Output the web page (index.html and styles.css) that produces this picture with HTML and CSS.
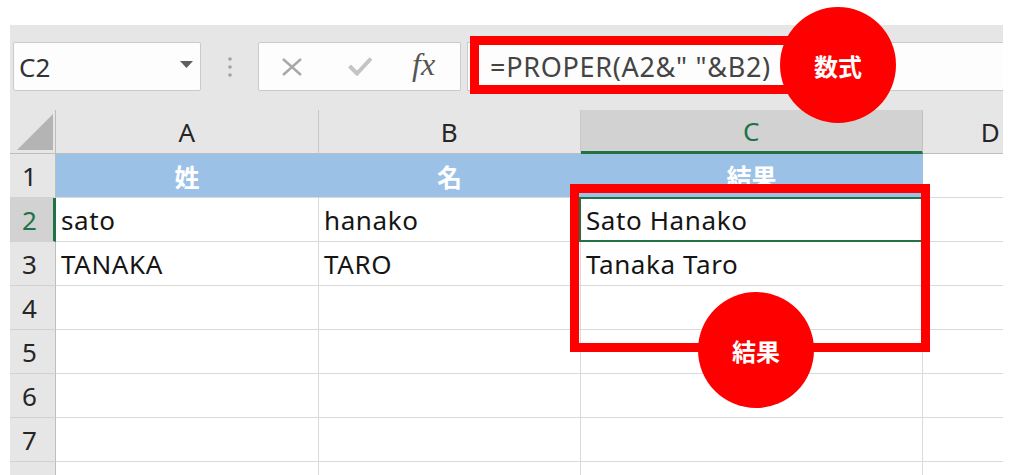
FILE: index.html
```html
<!DOCTYPE html>
<html lang="ja">
<head>
<meta charset="utf-8">
<title>PROPER</title>
<link rel="stylesheet" href="styles.css">
</head>
<body>
<div class="app">
  <div class="toolbar">
    <div class="namebox">
      <span>C2</span>
      <svg class="drop" width="13" height="7" viewBox="0 0 13 7"><polygon points="0,0 13,0 6.5,7" fill="#5f5f5f"/></svg>
    </div>
    <div class="grip">
      <svg width="4" height="20" viewBox="0 0 4 20"><circle cx="2" cy="2" r="1.8" fill="#a3a3a3"/><circle cx="2" cy="10" r="1.8" fill="#a3a3a3"/><circle cx="2" cy="18" r="1.8" fill="#a3a3a3"/></svg>
    </div>
    <div class="btnbox">
      <svg class="ico-x" width="20" height="18" viewBox="0 0 20 18"><path d="M1 1 L19 17 M19 1 L1 17" stroke="#a8a8a8" stroke-width="2.4" fill="none"/></svg>
      <svg class="ico-ok" width="24" height="20" viewBox="0 0 24 20"><polyline points="1.5,10 9,17.5 23,2.5" stroke="#c4c4c4" stroke-width="4" fill="none"/></svg>
      <span class="fx">fx</span>
    </div>
    <div class="formula">=PROPER(A2&amp;" "&amp;B2)</div>
  </div>
  <div class="sheet">
    <div class="c corner"><svg width="36" height="36" viewBox="0 0 36 36"><polygon points="0,36 36,0 36,36" fill="#b4b4b4"/></svg></div>
    <div class="c ch">A</div>
    <div class="c ch">B</div>
    <div class="c ch active">C</div>
    <div class="c ch">D</div>

    <div class="c rh">1</div>
    <div class="c hd">姓</div>
    <div class="c hd">名</div>
    <div class="c hd">結果</div>
    <div class="c"></div>

    <div class="c rh active">2</div>
    <div class="c">sato</div>
    <div class="c">hanako</div>
    <div class="c sel">Sato Hanako</div>
    <div class="c"></div>

    <div class="c rh">3</div>
    <div class="c">TANAKA</div>
    <div class="c">TARO</div>
    <div class="c">Tanaka Taro</div>
    <div class="c"></div>

    <div class="c rh">4</div><div class="c"></div><div class="c"></div><div class="c"></div><div class="c"></div>
    <div class="c rh">5</div><div class="c"></div><div class="c"></div><div class="c"></div><div class="c"></div>
    <div class="c rh">6</div><div class="c"></div><div class="c"></div><div class="c"></div><div class="c"></div>
    <div class="c rh">7</div><div class="c"></div><div class="c"></div><div class="c"></div><div class="c"></div>
    <div class="c rh">8</div><div class="c"></div><div class="c"></div><div class="c"></div><div class="c"></div>
  </div>
</div>

<div class="mark mark-formula"></div>
<div class="mark mark-result"></div>
<div class="badge badge-formula">数式</div>
<div class="badge badge-result">結果</div>
</body>
</html>
```

FILE: styles.css
```css
html, body {
  margin: 0;
  height: 475px;
  overflow: hidden;
  background: #ffffff;
}
body {
  position: relative;
  font-family: "Noto Sans", "Noto Sans CJK JP", sans-serif;
}
.app {
  margin: 25px 0 0 10px;
  width: 993px;
  overflow: hidden;
}
.toolbar {
  background: #e6e6e6;
  height: 85px;
  box-sizing: border-box;
  padding-top: 17px;
  display: flex;
  align-items: flex-start;
}
.namebox {
  margin-left: 3px;
  width: 188px;
  height: 49px;
  box-sizing: border-box;
  border: 1px solid #cacaca;
  border-radius: 2px;
  background: #fdfdfd;
  display: flex;
  align-items: center;
  justify-content: space-between;
  padding: 0 7px 0 5px;
  font-size: 26px;
  color: #333333;
}
.drop { margin-top: -4px; }
.grip {
  width: 57px;
  height: 49px;
  display: flex;
  align-items: center;
  justify-content: center;
}
.btnbox {
  width: 203px;
  height: 49px;
  box-sizing: border-box;
  border: 1px solid #cacaca;
  border-radius: 2px;
  background: #fdfdfd;
  display: flex;
  align-items: center;
  padding-left: 23px;
}
.ico-ok { margin-left: 46px; margin-top: -2px; }
.fx {
  margin-left: 40px;
  font-family: "Liberation Serif", serif;
  font-style: italic;
  font-size: 32px;
  color: #555555;
  margin-top: -4px;
}
.formula {
  margin-left: 6px;
  flex: 1;
  height: 49px;
  box-sizing: border-box;
  border: 1px solid #cacaca;
  border-right: none;
  background: #fdfdfd;
  padding-left: 22px;
  display: flex;
  align-items: center;
  white-space: pre;
  font-size: 27px;
  letter-spacing: 0.7px;
  color: #444444;
}
.sheet {
  display: grid;
  grid-template-columns: 46px 263px 262px 342px 136px;
  grid-template-rows: 44px;
  grid-auto-rows: 44px;
  width: max-content;
}
.c {
  box-sizing: border-box;
  border-right: 1px solid #dadada;
  border-bottom: 1px solid #dadada;
  display: flex;
  align-items: center;
  padding-left: 5px;
  font-size: 26px;
  letter-spacing: 0.6px;
  color: #151515;
  white-space: nowrap;
  position: relative;
}
.corner {
  background: #e6e6e6;
  border-right: 1px solid #bdbdbd;
  border-bottom: 1px solid #bdbdbd;
  padding: 0 2px 3px 0;
  justify-content: flex-end;
  align-items: flex-end;
}
.ch {
  background: #e6e6e6;
  border-right: 1px solid #c8c8c8;
  border-bottom: 1px solid #bdbdbd;
  justify-content: center;
  padding: 0;
  color: #262626;
}
.ch.active {
  background: #d2d2d2;
  color: #217346;
  border-bottom: 3px solid #217346;
  border-right-color: #c0c0c0;
}
.rh {
  background: #e6e6e6;
  border-right: 1px solid #bdbdbd;
  border-bottom: 1px solid #d2d2d2;
  justify-content: center;
  padding: 0 6px 0 0;
  color: #262626;
  letter-spacing: 0;
}
.rh.active {
  background: #d2d2d2;
  color: #217346;
  border-right: 3px solid #217346;
  padding-right: 4px;
}
.hd {
  background: #9bc2e6;
  border-right-color: #9bc2e6;
  color: #ffffff;
  font-family: "Noto Sans CJK JP", sans-serif;
  font-weight: 700;
  font-size: 25px;
  letter-spacing: 0;
  justify-content: center;
  padding: 0;
}
.sel::after {
  content: "";
  position: absolute;
  left: -2px;
  top: -1px;
  right: -1px;
  bottom: -1px;
  border: 2px solid #217346;
}
.mark {
  position: absolute;
  box-sizing: border-box;
  border: 9px solid #ff0000;
}
.mark-formula {
  left: 470px;
  top: 36px;
  width: 350px;
  height: 58px;
}
.mark-result {
  left: 570px;
  top: 184px;
  width: 360px;
  height: 168px;
}
.badge {
  position: absolute;
  width: 116px;
  height: 116px;
  border-radius: 50%;
  background: #ff0000;
  color: #ffffff;
  font-family: "Noto Sans CJK JP", sans-serif;
  font-weight: 700;
  font-size: 24px;
  display: flex;
  align-items: center;
  justify-content: center;
}
.badge-formula { left: 780px; top: 7px; }
.badge-result { left: 698px; top: 292px; }
```
